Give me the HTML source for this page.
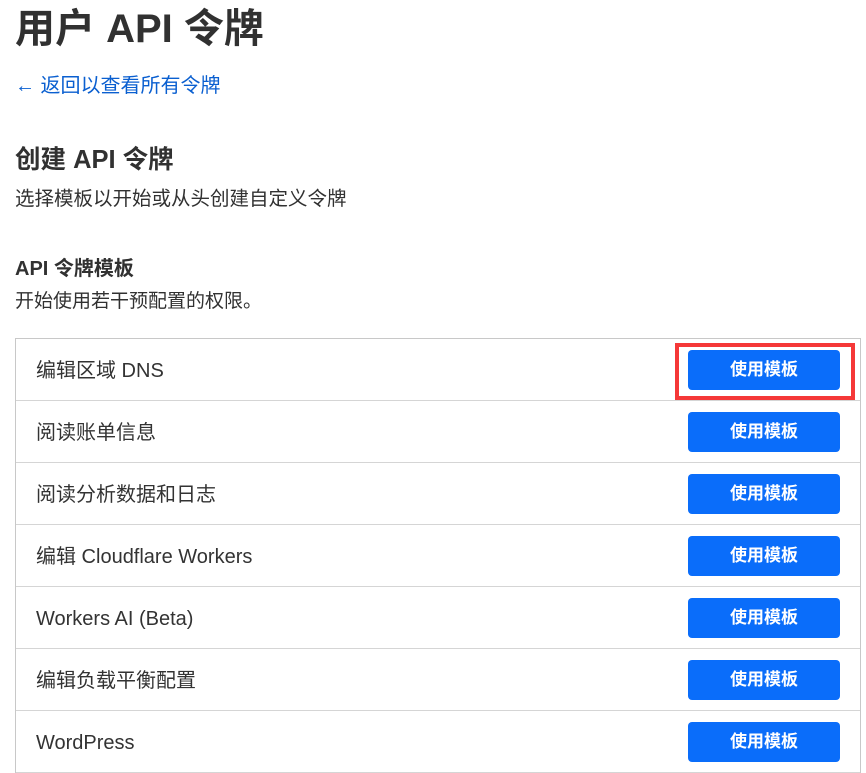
<!DOCTYPE html>
<html><head><meta charset="utf-8"><style>
body{margin:0;background:#fff;font-family:"Liberation Sans","Noto Sans CJK SC",sans-serif;color:#313131;width:866px;height:773px;overflow:hidden;position:relative}
.a{position:absolute;white-space:nowrap}
h1{position:absolute;left:15px;top:4px;margin:0;font-size:40px;font-weight:bold;line-height:50px}
.link{left:15px;top:73px;font-size:20px;color:#0a5fd0;line-height:26px}
.h2{left:15px;top:144px;font-size:25.5px;font-weight:bold;line-height:32px}
.p{font-size:19.5px;line-height:26px}
.h3{left:15px;top:255px;font-size:20px;font-weight:bold;line-height:28px}
.tbl{position:absolute;left:15px;top:338px;width:844px;border:1px solid #c8c8c8;border-bottom:none}
.row{height:61px;border-bottom:1px solid #d5d5d5;position:relative}
.row span{position:absolute;left:20px;top:19px;font-size:20px;line-height:26px;color:#333}
.btn{position:absolute;left:672px;top:11px;width:152px;height:40px;background:#0a6dfa;border-radius:4px;color:#fff;font-size:17px;font-weight:bold;text-align:center;line-height:40px}
.red{position:absolute;left:675px;top:343px;width:172px;height:49px;border:4px solid #f53838}
</style></head><body>
<h1>用户 API 令牌</h1>
<div class="a link">← 返回以查看所有令牌</div>
<div class="a h2">创建 API 令牌</div>
<div class="a p" style="left:15px;top:186px">选择模板以开始或从头创建自定义令牌</div>
<div class="a h3">API 令牌模板</div>
<div class="a p" style="left:15px;top:289px;font-size:19px">开始使用若干预配置的权限。</div>
<div class="tbl">
<div class="row"><span>编辑区域 DNS</span><div class="btn">使用模板</div></div>
<div class="row"><span>阅读账单信息</span><div class="btn">使用模板</div></div>
<div class="row"><span>阅读分析数据和日志</span><div class="btn">使用模板</div></div>
<div class="row"><span>编辑 Cloudflare Workers</span><div class="btn">使用模板</div></div>
<div class="row"><span>Workers AI (Beta)</span><div class="btn">使用模板</div></div>
<div class="row"><span>编辑负载平衡配置</span><div class="btn">使用模板</div></div>
<div class="row"><span>WordPress</span><div class="btn">使用模板</div></div>
</div>
<div class="red"></div>
</body></html>
